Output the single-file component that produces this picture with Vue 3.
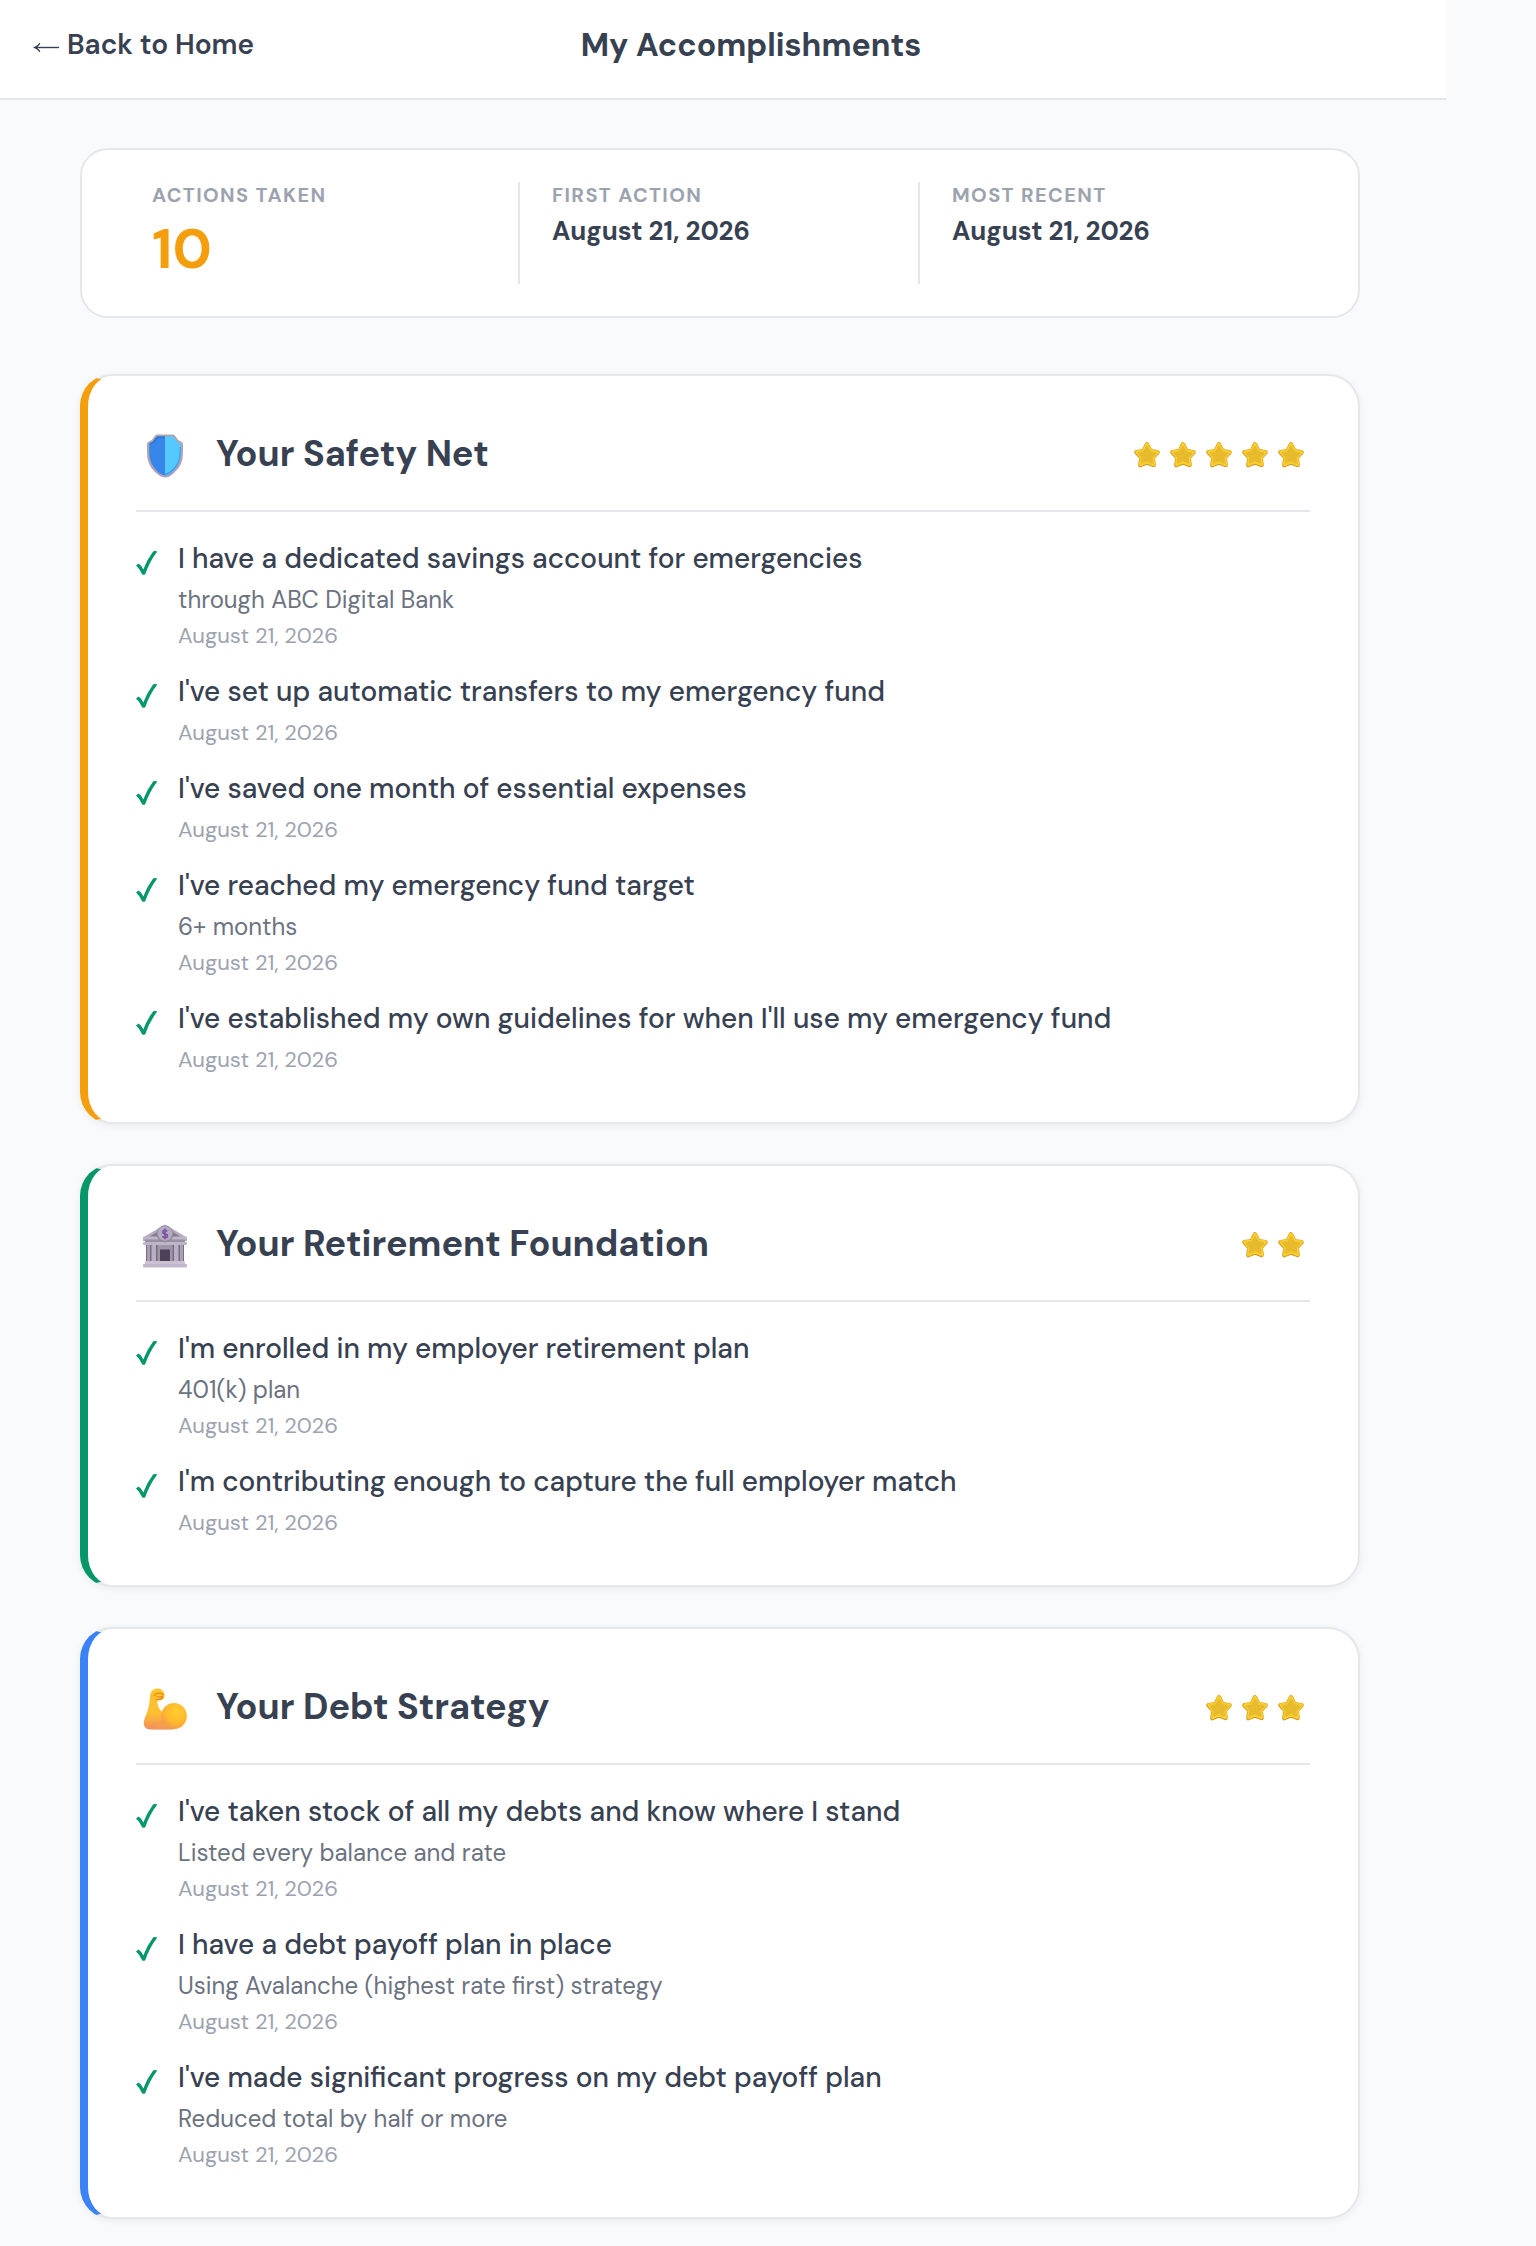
<template>
  <div class="page">
    <header class="topbar">
      <button type="button" class="back">
        <svg class="back-arrow" viewBox="0 0 28 28" aria-hidden="true">
          <path d="M27 16.5H4" fill="none" stroke="currentColor" stroke-width="1.4" />
          <path d="M1 16.5C4 15.4 6 14 7.6 11.8L8.4 12.5C7.4 14.3 6 15.6 4.6 16.5C6 17.4 7.4 18.8 8.4 20.5L7.6 21.2C6 19 4 17.6 1 16.5Z" fill="currentColor" />
        </svg>
        Back to Home
      </button>
      <h1>My Accomplishments</h1>
      <div class="topbar-spacer"></div>
    </header>

    <main class="content">
      <section class="summary">
        <div v-for="stat in stats" :key="stat.label" class="stat">
          <span class="stat-label">{{ stat.label }}</span>
          <span class="stat-value" :class="{ big: stat.big }">{{ stat.value }}</span>
        </div>
      </section>

      <section v-for="group in groups" :key="group.title" class="card" :class="group.theme">
        <div class="card-header">
          <div class="card-icon">
            <svg v-if="group.icon === 'shield'" viewBox="0 0 44 44" aria-hidden="true">
              <defs>
                <linearGradient id="shield-rim" x1="0" y1="0" x2="1" y2="1">
                  <stop offset="0" stop-color="#aaa5b0" />
                  <stop offset="1" stop-color="#b3a2bd" />
                </linearGradient>
              </defs>
              <path d="M14 .5H30Q32 .5 33 3Q34.500 6.500 38 7.500Q40 8 40 10V19Q40 31 32 38Q27 43.500 22 43.500Q17 43 12 38Q4 31 4 19V10Q4 8 6 7.500Q9.500 6.500 11 3Q12 .5 14 .5Z" fill="url(#shield-rim)" />
              <path d="M22 2.500H15Q13 2.500 12 5Q10.500 8 7 9.300Q6.200 9.600 6.200 11V19Q6.500 29.500 13.500 36.500Q18 41.200 22 41.500Z" fill="#3787eb" />
              <path d="M22 2.500H29Q31 2.500 32 5Q33.500 8 37 9.300Q37.800 9.600 37.800 11V19Q37.500 29.500 30.500 36.500Q26 41.200 22 41.500Z" fill="#55c8ff" />
              <path d="M37.800 13V19Q37.500 29.500 30.500 36.500Q26 41.200 22 41.500V40Q26 39 30 35Q36.300 28.500 36.600 19V13Z" fill="#3b9cf0" />
              <path d="M22 2.500H15Q13 2.500 12 5Q10.500 8 7 9.300V11Q11.500 9.500 13.500 5.500Q14.200 4 15.500 4H22Z" fill="#2c70d2" />
            </svg>
            <svg v-else-if="group.icon === 'bank'" viewBox="0 0 44 44" aria-hidden="true">
              <path d="M0 13.500L22 .5L44 13.500V17H0Z" fill="#b4abbd" />
              <path d="M6 13L16 7V13ZM38 13L28 7V13Z" fill="#85798f" />
              <rect x="0" y="12.500" width="44" height="3" rx="1" fill="#bfb5c8" />
              <rect x="2" y="15.500" width="40" height="3" fill="#9a90a5" />
              <rect x="0" y="18" width="44" height="3" rx="1" fill="#bfb5c8" />
              <rect x="3" y="21" width="38" height="17" fill="#776c82" />
              <rect x="4" y="21" width="3" height="16" fill="#aaa0b3" />
              <rect x="8.500" y="21" width="4.500" height="16" fill="#b9afc2" />
              <rect x="14.500" y="21" width="15" height="17" fill="#9f95a9" />
              <rect x="31" y="21" width="4.500" height="16" fill="#b9afc2" />
              <rect x="37" y="21" width="3" height="16" fill="#aaa0b3" />
              <rect x="17" y="25.500" width="10" height="11.500" fill="#4d4058" />
              <rect x="2" y="37" width="40" height="3.500" rx="1" fill="#cbc1d2" />
              <rect x="0" y="40" width="44" height="3.500" rx="1" fill="#c3b8cb" />
              <circle cx="22" cy="10" r="8.500" fill="#9389a0" />
              <circle cx="22" cy="9.500" r="7.300" fill="#b5abbf" />
              <path d="M24.300 7.500Q23.700 6.200 22 6.200Q19.800 6.200 19.800 7.900Q19.800 9.500 22 9.800Q24.400 10.200 24.400 12Q24.400 13.700 22 13.700Q20 13.700 19.600 12.300M22 4.500V15.300" fill="none" stroke="#7950a8" stroke-width="1.600" />
            </svg>
            <svg v-else viewBox="0 0 44 44" aria-hidden="true">
              <defs>
                <linearGradient id="arm-skin" x1="0" y1="0" x2="0" y2="1">
                  <stop offset="0" stop-color="#ffc52f" />
                  <stop offset=".6" stop-color="#ffbe2e" />
                  <stop offset="1" stop-color="#f08f62" />
                </linearGradient>
                <radialGradient id="arm-bicep" cx=".6" cy=".35" r=".7">
                  <stop offset="0" stop-color="#ffcd31" />
                  <stop offset=".6" stop-color="#ffb82c" />
                  <stop offset="1" stop-color="#f59a52" />
                </radialGradient>
              </defs>
              <path d="M7 10C7 5 10 1 15 1.500C19 2 22 5 21.500 9C21.500 12.500 18 14 14.500 13.500C14 18 15.500 21 19 25L30 34V42.500H8C2.500 42.500 0 39 1 34C2.500 27 5.500 24 6 18Z" fill="url(#arm-skin)" />
              <ellipse cx="31" cy="29" rx="12.800" ry="13" fill="url(#arm-bicep)" />
              <path d="M19 28L28 38L36 41Q33 42.500 29 42.500H10Q17 38 19 28Z" fill="#f59f4c" opacity=".5" />
              <path d="M11 8.500Q15 4.500 20.500 7.500M13 12.500Q17 13.500 20 10.500M14 9.500Q17 11 19.500 9" fill="none" stroke="#e58a1e" stroke-width="1.200" stroke-linecap="round" />
            </svg>
          </div>
          <h2>{{ group.title }}</h2>
          <div class="stars" role="img" :aria-label="group.items.length + ' stars'">
            <svg v-for="n in group.items.length" :key="n" viewBox="0 0 28 28" aria-hidden="true">
              <path d="M14 3.500L17.300 10.200L24.500 11.200L19.600 16.500L20.500 24L14 21.300L7.500 24L8.400 16.500L3.500 11.200L10.700 10.200Z" fill="#d59a22" stroke="#d59a22" stroke-width="4.600" stroke-linejoin="round" />
              <path d="M14 3.500L17.300 10.200L24.300 11L19.600 16.300L20.500 23.300L14 20.700L7.800 23.300L8.700 16.300L4 11L10.900 10.200Z" fill="#f8cd2e" stroke="#f8cd2e" stroke-width="3.600" stroke-linejoin="round" />
              <path d="M14 6L17 11.300L22.500 12.300L18.500 16.500L19.300 21.500L14 19.200L8.900 21.500L9.700 16.500L6 12.300L11.200 11.300Z" fill="#e7bb2d" stroke="#e7bb2d" stroke-width="2" stroke-linejoin="round" />
            </svg>
          </div>
        </div>

        <ul class="items">
          <li v-for="item in group.items" :key="item.text" class="item">
            <svg class="check" viewBox="0 0 22 24" aria-hidden="true">
              <path d="M0 14.500L2.600 12.600Q5.500 14.500 7.300 18.500Q11 8.500 17.300.3Q19 -.2 21.300.4Q13.500 10.500 9.200 23.200Q7.800 24.200 6.300 23.400Q4 18 0 14.500Z" fill="currentColor" />
            </svg>
            <div class="item-body">
              <span class="item-text">{{ item.text }}</span>
              <span v-if="item.note" class="item-note">{{ item.note }}</span>
              <span class="item-date">{{ item.date }}</span>
            </div>
          </li>
        </ul>
      </section>
    </main>
  </div>
</template>

<script setup>
const date = 'August 21, 2026'

const groups = [
  {
    title: 'Your Safety Net',
    icon: 'shield',
    theme: 'amber',
    items: [
      { text: 'I have a dedicated savings account for emergencies', note: 'through ABC Digital Bank', date },
      { text: "I've set up automatic transfers to my emergency fund", date },
      { text: "I've saved one month of essential expenses", date },
      { text: "I've reached my emergency fund target", note: '6+ months', date },
      { text: "I've established my own guidelines for when I'll use my emergency fund", date }
    ]
  },
  {
    title: 'Your Retirement Foundation',
    icon: 'bank',
    theme: 'green',
    items: [
      { text: "I'm enrolled in my employer retirement plan", note: '401(k) plan', date },
      { text: "I'm contributing enough to capture the full employer match", date }
    ]
  },
  {
    title: 'Your Debt Strategy',
    icon: 'arm',
    theme: 'blue',
    items: [
      { text: "I've taken stock of all my debts and know where I stand", note: 'Listed every balance and rate', date },
      { text: 'I have a debt payoff plan in place', note: 'Using Avalanche (highest rate first) strategy', date },
      { text: "I've made significant progress on my debt payoff plan", note: 'Reduced total by half or more', date }
    ]
  }
]

const total = groups.reduce((sum, group) => sum + group.items.length, 0)

const stats = [
  { label: 'Actions taken', value: total, big: true },
  { label: 'First action', value: date },
  { label: 'Most recent', value: date }
]
</script>

<style>
body {
  margin: 0;
  background: #f9fafc;
}
</style>

<style scoped>
.page {
  font-family: "DM Sans", "Open Sans", sans-serif;
  color: #374151;
}

h1,
h2 {
  margin: 0;
  font-weight: 700;
}

.topbar {
  display: flex;
  justify-content: space-between;
  align-items: center;
  margin-right: 90px;
  padding: 24px 32px 32px;
  background: #fff;
  border-bottom: 2px solid #e5e7eb;
}

.back {
  display: flex;
  align-items: center;
  gap: 7px;
  padding: 0;
  border: 0;
  background: none;
  color: inherit;
  font: inherit;
  font-size: 28px;
  font-weight: 600;
  line-height: 40px;
  cursor: pointer;
}

.back-arrow {
  width: 28px;
  height: 28px;
}

h1 {
  font-size: 32px;
  line-height: 42px;
}

.topbar-spacer {
  width: 166px;
}

.content {
  display: flex;
  flex-direction: column;
  gap: 40px;
  padding: 48px 176px 28px 80px;
}

.summary {
  display: grid;
  grid-template-columns: repeat(3, 1fr);
  margin-bottom: 16px;
  padding: 32px 38px;
  background: #fff;
  border: 2px solid #e5e7eb;
  border-radius: 28px;
}

.stat {
  display: flex;
  flex-direction: column;
  gap: 6px;
  padding: 0 32px;
  border-right: 2px solid #e5e7eb;
}

.stat:last-child {
  border-right: 0;
}

.stat-label {
  font-size: 20px;
  font-weight: 700;
  line-height: 26px;
  letter-spacing: 0.07em;
  text-transform: uppercase;
  color: #9ca3af;
}

.stat-value {
  font-size: 26px;
  font-weight: 700;
  line-height: 34px;
}

.stat-value.big {
  font-size: 56px;
  line-height: 70px;
  color: #f59e0b;
}

.card {
  padding: 48px 48px 46px;
  background: #fff;
  border: 2px solid #e5e7eb;
  border-left-width: 8px;
  border-radius: 32px;
  box-shadow: 0 2px 8px rgba(0, 0, 0, 0.06);
}

.card.amber {
  border-left-color: #f59e0b;
}

.card.green {
  border-left-color: #059669;
}

.card.blue {
  border-left-color: #3b82f6;
}

.card-header {
  display: flex;
  align-items: center;
  gap: 22px;
  height: 60px;
  padding-bottom: 26px;
  border-bottom: 2px solid #e5e7eb;
}

.card-icon {
  display: flex;
  justify-content: center;
  width: 58px;
  padding-top: 4px;
}

.card-icon svg {
  width: 44px;
  height: 44px;
}

h2 {
  flex: 1;
  font-size: 36px;
  line-height: 48px;
}

.stars {
  display: flex;
  gap: 8px;
  padding: 2px 5px 0 0;
}

.stars svg {
  width: 28px;
  height: 28px;
}

.items {
  display: flex;
  flex-direction: column;
  gap: 20px;
  margin: 27px 0 0;
  padding: 0;
  list-style: none;
}

.item {
  display: flex;
  align-items: flex-start;
  gap: 20px;
}

.check {
  flex-shrink: 0;
  width: 22px;
  height: 24px;
  margin-top: 12px;
  color: #059669;
}

.item-body {
  display: flex;
  flex-direction: column;
  gap: 5px;
}

.item-text {
  font-size: 28px;
  font-weight: 500;
  line-height: 40px;
}

.item-note {
  font-size: 24px;
  line-height: 31px;
  color: #6b7280;
}

.item-date {
  font-size: 22px;
  line-height: 32px;
  color: #9ca3af;
}
</style>
